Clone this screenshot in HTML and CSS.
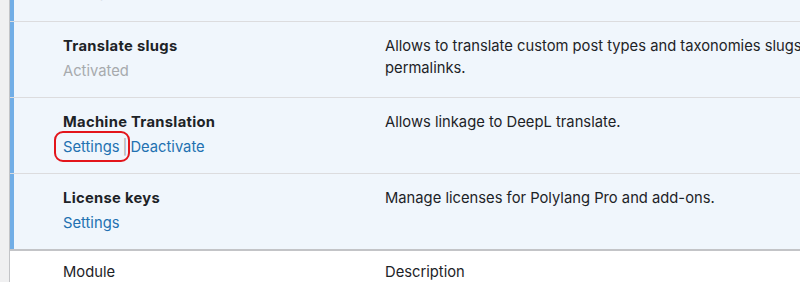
FILE: index.html
```html
<!DOCTYPE html>
<html lang="en">
<head>
  <meta charset="UTF-8">
  <meta name="viewport" content="width=device-width, initial-scale=1.0">
  <title>Polylang - Modules</title>
  <link rel="stylesheet" href="styles.css">
</head>
<body>
  <!-- Modules list -->
  <div class="modules">
    <div class="module-row active cut">
      <div class="module-name">
        <strong>Share slugs</strong>
        <div class="row-actions"><span class="done">Activated</span></div>
      </div>
      <div class="module-desc">Allows to share the same url slug across languages for posts and terms.</div>
    </div>

    <div class="module-row active">
      <div class="module-name">
        <strong>Translate slugs</strong>
        <div class="row-actions"><span class="done">Activated</span></div>
      </div>
      <div class="module-desc">Allows to translate custom post types and taxonomies slugs in permalinks.</div>
    </div>

    <div class="module-row active">
      <div class="module-name">
        <strong>Machine Translation</strong>
        <div class="row-actions">
          <span class="highlight"><a href="#">Settings</a></span><span class="sep">|</span><a href="#">Deactivate</a>
        </div>
      </div>
      <div class="module-desc">Allows linkage to DeepL translate.</div>
    </div>

    <div class="module-row active last">
      <div class="module-name">
        <strong>License keys</strong>
        <div class="row-actions"><a href="#">Settings</a></div>
      </div>
      <div class="module-desc">Manage licenses for Polylang Pro and add-ons.</div>
    </div>

    <!-- Footer headings -->
    <div class="module-row foot">
      <div class="module-name">Module</div>
      <div class="module-desc">Description</div>
    </div>
  </div>
</body>
</html>
```

FILE: styles.css
```css
html, body {
  overflow: hidden;
}
body {
  margin: 0;
  padding-left: 9px;
  background-color: #f0f0f1;
  font-family: Inter, "Liberation Sans", Arial, sans-serif;
  font-size: 14.75px;
  line-height: 22px;
  color: #1d2327;
}
.modules {
  width: 1000px;
  border-left: 1px solid #c3c4c7;
  background-color: #fff;
}
.module-row {
  display: grid;
  grid-template-columns: 322px 440px;
  padding: 13px 0 15px 53px;
  border-bottom: 1px solid #dcdcde;
}
.module-row.active {
  background-color: #f0f6fc;
  box-shadow: inset 4px 0 0 #72aee6;
}
.module-row.cut {
  margin-top: -54px;
}
.module-row.last {
  border-bottom: 2px solid #c3c4c7;
}
.module-row.foot {
  padding-top: 10px;
  border-bottom: none;
}
.module-name strong {
  font-weight: 700;
  letter-spacing: 0.3px;
}
.row-actions {
  margin-top: 3px;
}
.row-actions a {
  color: #2271b1;
  text-decoration: none;
}
.row-actions .done {
  color: #a7aaad;
}
.row-actions .sep {
  color: #a7aaad;
  margin: 0 3px 0 3px;
}
.highlight {
  position: relative;
  display: inline-block;
}
/* red annotation ring around the link */
.highlight::after {
  content: "";
  position: absolute;
  left: -9px;
  right: -11px;
  top: -5px;
  bottom: -4px;
  border: 2px solid #e3151b;
  border-radius: 9px;
}
```
